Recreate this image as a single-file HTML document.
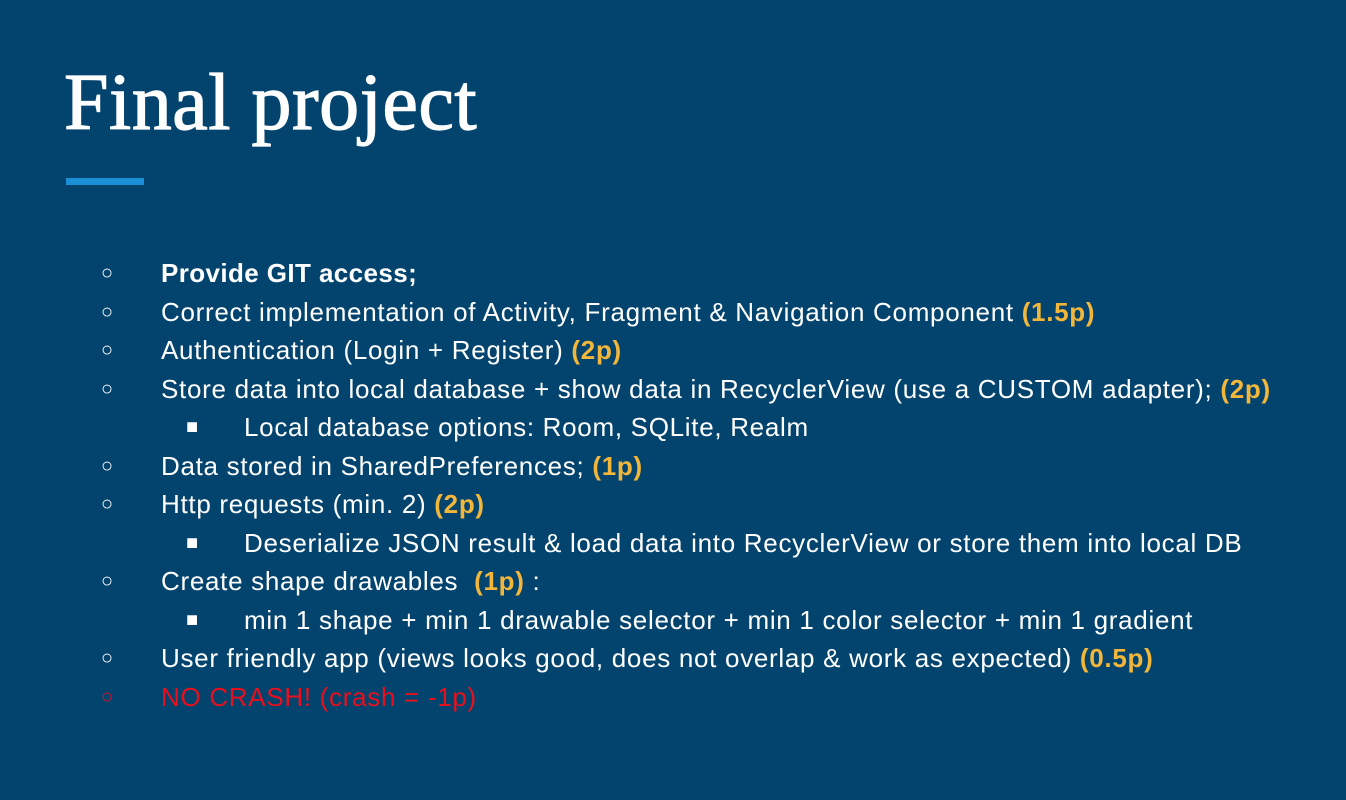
<!DOCTYPE html>
<html><head><meta charset="utf-8"><style>
html,body{margin:0;padding:0}
body{width:1346px;height:800px;background:#03446e;position:relative;overflow:hidden;font-family:"Liberation Sans",Arial,sans-serif;color:#fff}
h1{position:absolute;left:64px;top:60px;margin:0;font-family:"Liberation Serif",serif;font-weight:normal;font-size:80px;letter-spacing:0.5px;line-height:86px;-webkit-text-stroke:1.2px #fff}
.bar{position:absolute;left:66px;top:178px;width:78px;height:7px;background:#1a8fd6}
.l{position:absolute;font-size:26px;letter-spacing:0.7px;white-space:nowrap;line-height:30px}
.b{position:absolute;font-size:20px;line-height:30px}
.y{color:#f2b63a;font-weight:bold}
.r{color:#e8101c}
</style></head><body>
<h1>Final project</h1>
<div class="bar"></div>
<div class="b" style="left:101px;top:258px">○</div><div class="l" style="left:161px;top:258px;font-weight:bold;letter-spacing:0.4px">Provide GIT access;</div>
<div class="b" style="left:101px;top:297px">○</div><div class="l" style="left:161px;top:297px">Correct implementation of Activity, Fragment &amp; Navigation Component <span class="y">(1.5p)</span></div>
<div class="b" style="left:101px;top:335px">○</div><div class="l" style="left:161px;top:335px">Authentication (Login + Register) <span class="y">(2p)</span></div>
<div class="b" style="left:101px;top:374px">○</div><div class="l" style="left:161px;top:374px">Store data into local database + show data in RecyclerView (use a CUSTOM adapter); <span class="y">(2p)</span></div>
<div class="b" style="left:186px;top:412px">■</div><div class="l" style="left:244px;top:412px">Local database options: Room, SQLite, Realm</div>
<div class="b" style="left:101px;top:451px">○</div><div class="l" style="left:161px;top:451px">Data stored in SharedPreferences; <span class="y">(1p)</span></div>
<div class="b" style="left:101px;top:489px">○</div><div class="l" style="left:161px;top:489px">Http requests (min. 2) <span class="y">(2p)</span></div>
<div class="b" style="left:186px;top:528px">■</div><div class="l" style="left:244px;top:528px">Deserialize JSON result &amp; load data into RecyclerView or store them into local DB</div>
<div class="b" style="left:101px;top:566px">○</div><div class="l" style="left:161px;top:566px">Create shape drawables&nbsp; <span class="y">(1p)</span> :</div>
<div class="b" style="left:186px;top:605px">■</div><div class="l" style="left:244px;top:605px">min 1 shape + min 1 drawable selector + min 1 color selector + min 1 gradient</div>
<div class="b" style="left:101px;top:643px">○</div><div class="l" style="left:161px;top:643px">User friendly app (views looks good, does not overlap &amp; work as expected) <span class="y">(0.5p)</span></div>
<div class="b r" style="left:101px;top:682px">○</div><div class="l r" style="left:161px;top:682px">NO CRASH! (crash = -1p)</div>
</body></html>
